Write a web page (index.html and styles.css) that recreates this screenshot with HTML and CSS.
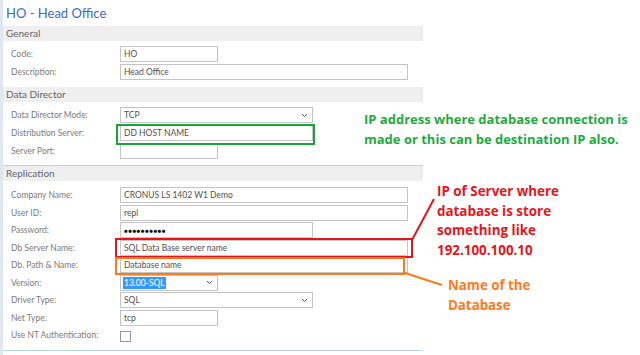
FILE: index.html
```html
<!DOCTYPE html>
<html lang="en">
<head>
    <meta charset="UTF-8">
    <meta name="viewport" content="width=device-width, initial-scale=1.0">
    <title>HO - Head Office</title>
    <link rel="stylesheet" href="styles.css">
</head>
<body>
    <div class="stage">
        <div class="panel">
            <div class="title">HO - Head Office</div>

            <div class="section-head">General</div>
            <div class="section gen">
                <div class="row"><span class="label">Code:</span><span class="field short">HO</span></div>
                <div class="row"><span class="label">Description:</span><span class="field long">Head Office</span></div>
            </div>

            <div class="section-head">Data Director</div>
            <div class="section dd">
                <div class="row"><span class="label">Data Director Mode:</span><span class="field medium select">TCP<svg class="chev" width="7" height="5" viewBox="0 0 7 5"><path d="M1 1l2.5 2.5L6 1" fill="none" stroke="#555" stroke-width="1"/></svg></span></div>
                <div class="row"><span class="label">Distribution Server:</span><span class="field medium">DD HOST NAME</span></div>
                <div class="row"><span class="label">Server Port:</span><span class="field short"></span></div>
            </div>

            <div class="repl">
                <div class="section-head">Replication</div>
                <div class="section rp">
                    <div class="row"><span class="label">Company Name:</span><span class="field long">CRONUS LS 1402 W1 Demo</span></div>
                    <div class="row"><span class="label">User ID:</span><span class="field long">repl</span></div>
                    <div class="row"><span class="label">Password:</span><span class="field medium dots">&#9679;&#9679;&#9679;&#9679;&#9679;&#9679;&#9679;&#9679;&#9679;&#9679;</span></div>
                    <div class="row"><span class="label">Db Server Name:</span><span class="field long">SQL Data Base server name</span></div>
                    <div class="row"><span class="label">Db. Path &amp; Name:</span><span class="field long">Database name</span></div>
                    <div class="row"><span class="label">Version:</span><span class="field short select"><span class="picked">13.00-SQL</span><svg class="chev" width="7" height="5" viewBox="0 0 7 5"><path d="M1 1l2.5 2.5L6 1" fill="none" stroke="#555" stroke-width="1"/></svg></span></div>
                    <div class="row"><span class="label">Driver Type:</span><span class="field medium select">SQL<svg class="chev" width="7" height="5" viewBox="0 0 7 5"><path d="M1 1l2.5 2.5L6 1" fill="none" stroke="#555" stroke-width="1"/></svg></span></div>
                    <div class="row"><span class="label">Net Type:</span><span class="field short">tcp</span></div>
                    <div class="row"><span class="label">Use NT Authentication:</span><span class="check"></span></div>
                </div>
            </div>
        </div>

        <!-- callouts drawn over the form -->
        <div class="mark mark-green"></div>
        <div class="mark mark-red"></div>
        <div class="mark mark-orange"></div>
        <svg class="leaders" width="640" height="355" viewBox="0 0 640 355">
            <line x1="412" y1="240" x2="434" y2="199" stroke="#e8141a" stroke-width="2"/>
            <line x1="405" y1="273" x2="442" y2="285" stroke="#ff7a1c" stroke-width="2"/>
        </svg>

        <div class="note note-green">IP address where database connection is<br>made or this can be destination IP also.</div>
        <div class="note note-red">IP of Server where<br>database is store<br>something like<br>192.100.100.10</div>
        <div class="note note-orange">Name of the<br>Database</div>
    </div>
</body>
</html>
```

FILE: styles.css
```css
body {
    margin: 0;
    background-color: #fff;
    font-family: "Open Sans", "Noto Sans", sans-serif;
}
.stage {
    position: relative;
    width: 640px;
    height: 355px;
    overflow: hidden;
}
.panel {
    width: 420px;
    height: 355px;
    border-left: 3px solid #dfe7f3;
    font-family: Lato, "Open Sans", sans-serif;
}
.title {
    height: 26px;
    line-height: 26px;
    padding-left: 3px;
    font-size: 13px;
    color: #3a6cc6;
}
.section-head {
    height: 15px;
    line-height: 15px;
    padding-left: 3px;
    background-color: #efefef;
    font-size: 10px;
    color: #666;
}
.section {
    display: flex;
    flex-direction: column;
    gap: 2px;
    padding: 5px 0 7px 8px;
}
.section.rp {
    gap: 1.5px;
    padding-top: 6px;
}
.row {
    display: flex;
    align-items: center;
    height: 16px;
}
.label {
    width: 109px;
    font-size: 8.5px;
    color: #7a7a7a;
}
.field {
    display: flex;
    align-items: center;
    box-sizing: border-box;
    height: 16px;
    padding-left: 3px;
    border: 1px solid #c4c4c4;
    font-size: 8.5px;
    color: #505050;
    background-color: #fff;
}
.field.short { width: 98px; }
.field.medium { width: 193px; }
.field.long { width: 288px; }
.select {
    justify-content: space-between;
    padding-right: 4px;
}
.picked {
    background-color: #3399ff;
    color: #fff;
    padding: 0 1px;
    margin-left: -1px;
    line-height: 12px;
}
.dots {
    font-size: 6.5px;
    color: #111;
    letter-spacing: 0.3px;
}
.check {
    width: 9px;
    height: 9px;
    margin-top: 3px;
    border: 1px solid #999;
}
.repl {
    border-top: 1px solid #bcd3f0;
    border-bottom: 1px solid #bcd3f0;
    margin-top: -1px;
}
.mark {
    position: absolute;
    box-sizing: border-box;
    border: 2px solid;
}
.mark-green {
    left: 116px;
    top: 124px;
    width: 199px;
    height: 21px;
    border-color: #16a637;
}
.mark-red {
    left: 115px;
    top: 238px;
    width: 298px;
    height: 20px;
    border-color: #e8141a;
}
.mark-orange {
    left: 115px;
    top: 257px;
    width: 290px;
    height: 18px;
    border-color: #ff7a1c;
}
.leaders {
    position: absolute;
    left: 0;
    top: 0;
}
.note {
    position: absolute;
    font-size: 13px;
    font-weight: 700;
}
.note-green {
    left: 364px;
    top: 109px;
    line-height: 20px;
    color: #1faa3e;
}
.note-red {
    left: 437px;
    top: 182px;
    font-size: 13.4px;
    line-height: 19.5px;
    color: #e8141a;
}
.note-orange {
    left: 448px;
    top: 276px;
    font-size: 13.3px;
    line-height: 19.5px;
    color: #ff7a1c;
}
```
